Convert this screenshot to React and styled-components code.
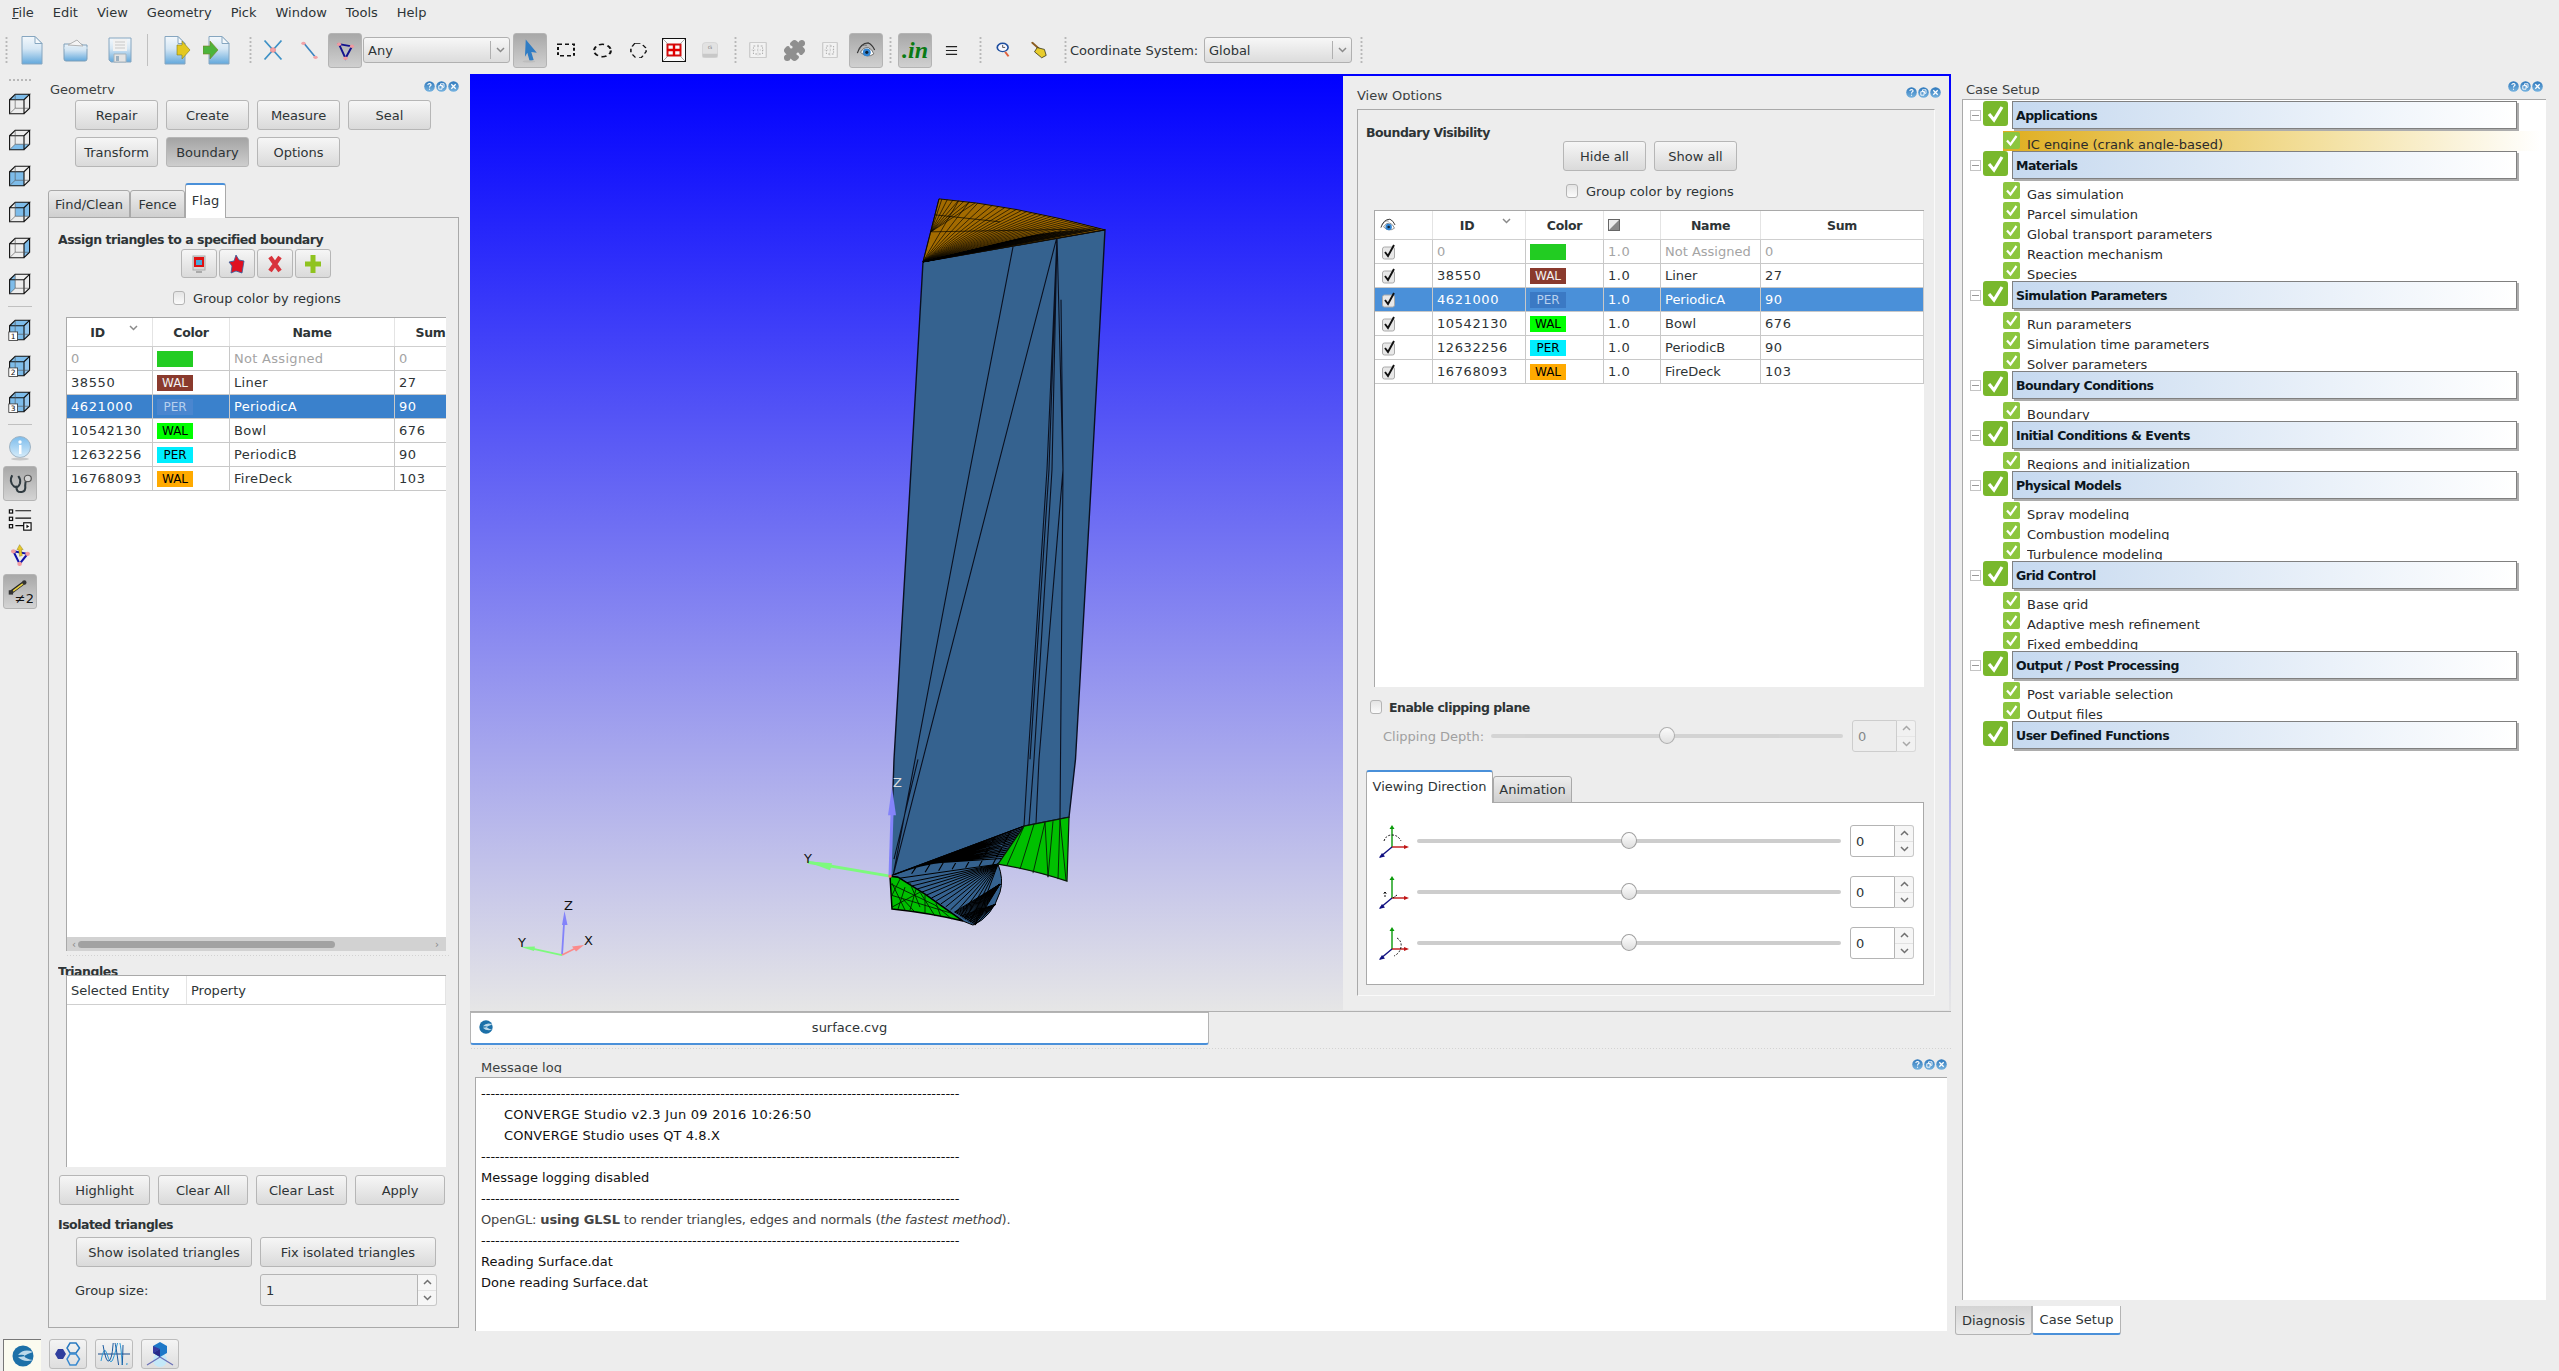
import React from "react";
import styled, { createGlobalStyle, css } from "styled-components";
import { Puzzle } from "lucide-react";

const FONT = `"DejaVu Sans", "Liberation Sans", sans-serif`;
const TXT = "#2e3436";
const EDGE = "#a9a9a9";
const boldText = css`font-weight: bold; font-size: 12.5px; letter-spacing: -0.5px;`;

const Global = createGlobalStyle`
  html, body { margin: 0; padding: 0; background: #ededed; overflow: hidden; }
  body { font-family: ${FONT}; font-size: 13px; color: ${TXT}; }
  * { box-sizing: border-box; }
`;

const Defs = styled.svg`width: 0; height: 0; position: absolute;`;
const Window = styled.div`width: 2559px; height: 1371px; display: flex; flex-direction: column; background: #ededed; overflow: hidden;`;
const MenuBar = styled.div`height: 26px; display: flex; align-items: center; gap: 19px; padding-left: 12px; flex: none;`;
const MenuItem = styled.span`font-size: 13px; line-height: 26px; &::first-letter { text-decoration: ${p => (p.$u ? "underline" : "none")}; }`;
const ToolBar = styled.div`height: 48px; display: flex; align-items: center; flex: none; padding-left: 3px; padding-top: 0;`;
const ToolButton = styled.div`
  flex: none; display: flex; align-items: center; justify-content: center; height: 35px; border-radius: 3px;
  width: ${p => p.$w || 34}px; margin: 0 ${p => (p.$w ? 0 : 1)}px;
  ${p => p.$on && css`background: linear-gradient(#a8a8a8, #d0d0d0); border: 1px solid #b4b4b4;`}
`;
const Grip = styled.div`
  flex: none; width: 3px; height: 28px; margin: 0 ${p => p.$r ?? 2}px 0 ${p => p.$l ?? 2}px;
  background: radial-gradient(circle, #b8b8b8 1px, transparent 1.2px) 0 0 / 3px 4px;
`;
const ToolSep = styled.div`flex: none; width: 1px; height: 32px; background: #c0c0c0; margin: 0 5px;`;
const Combo = styled.div`
  flex: none; height: 26px; width: ${p => p.$w}px; margin-left: ${p => p.$ml ?? 0}px; margin-right: ${p => p.$mr ?? 0}px;
  display: flex; align-items: center; justify-content: space-between; padding-left: 4px; font-size: 13px;
  border: 1px solid #b0b0b0; border-radius: 3px; background: linear-gradient(#f7f7f7, #dcdcdc);
`;
const ComboArrow = styled.span`
  width: 19px; height: 18px; border-left: 1px solid #b0b0b0; display: flex; align-items: center; justify-content: center;
`;
const ToolLabel = styled.span`flex: none; width: 128px; font-size: 13px; white-space: nowrap;`;

const Main = styled.div`height: 1263px; display: flex; flex: none;`;
const Rail = styled.div`width: 40px; flex: none; display: flex; flex-direction: column; align-items: center; padding-top: 4px;`;
const RailGrip = styled.div`
  width: 24px; height: 4px; margin-bottom: 4px; flex: none;
  background: radial-gradient(circle, #b8b8b8 1px, transparent 1.2px) 0 0 / 4px 4px;
`;
const RailButton = styled.div`
  width: 34px; height: 35px; margin-bottom: 1px; flex: none; display: flex; align-items: center; justify-content: center; border-radius: 3px;
  ${p => p.$on && css`background: linear-gradient(#a8a8a8, #d4d4d4); border: 1px solid #b4b4b4;`}
`;
const RailSep = styled.div`width: 24px; height: 1px; background: #c0c0c0; margin: 4px 0 5px; flex: none;`;

const LeftDock = styled.div`width: 430px; flex: none; padding: 6px 11px 0 8px; display: flex; flex-direction: column;`;
const DockTitle = styled.div`
  height: ${p => p.$h || 14}px; flex: none; overflow: hidden; display: flex; justify-content: space-between; align-items: flex-start;
  font-size: 13px; line-height: 20px; padding-left: ${p => p.$pl ?? 2}px; padding-right: ${p => p.$pr ?? 0}px; color: #3b3f41;
`;
const DockIcons = styled.span`display: flex; gap: 1px; padding-top: 1px;`;
const ButtonGrid = styled.div`
  display: grid; grid-template-columns: repeat(4, 83px); grid-auto-rows: 30px; column-gap: 8px; row-gap: 7px; margin: 6px 0 0 27px;
`;
const Btn = styled.div`
  height: 30px; display: flex; align-items: center; justify-content: center; font-size: 13px; white-space: nowrap;
  width: ${p => (p.$w ? `${p.$w}px` : "auto")}; flex: none; border-radius: 3px; border: 1px solid #b6b6b6; color: ${TXT};
  background: ${p => (p.$on ? "linear-gradient(#a4a4a4, #cecece)" : "linear-gradient(#f6f6f6, #dadada)")};
`;
const TabRow = styled.div`display: flex; align-items: flex-end; flex: none; margin: ${p => p.$mt}px 0 -1px ${p => p.$ml ?? 0}px; position: relative; z-index: 1;`;
const Tab = styled.div`
  width: ${p => p.$w}px; height: ${p => (p.$on ? p.$ha ?? 35 : p.$hi ?? 28)}px; display: flex; align-items: center; justify-content: center;
  font-size: 13px; border: 1px solid ${EDGE}; border-radius: 3px 3px 0 0;
  ${p => (p.$on
    ? css`background: #fff; border-top: 2px solid #4a90d9; border-bottom: none; padding-bottom: 2px;`
    : css`background: linear-gradient(#ededed, #cfcfcf);`)}
`;
const Frame = styled.div`
  flex: none; height: 1111px; display: flex; flex-direction: column; border: 1px solid ${EDGE}; background: #ededed;
`;
const BoldLine = styled.div`
  ${boldText}
  height: ${p => p.$h || 16}px; line-height: 16px; flex: none; overflow: hidden;
  margin: ${p => p.$mt}px 0 0 ${p => p.$ml}px; white-space: nowrap;
`;
const BoldInline = styled.span`${boldText}`;
const IconRow = styled.div`display: flex; gap: 2px; margin: 1px 0 0 132px; flex: none;`;
const IconBtn = styled.div`
  width: 36px; height: 29px; display: flex; align-items: center; justify-content: center; border-radius: 3px; border: 1px solid #b6b6b6;
  background: linear-gradient(#f6f6f6, #dadada);
`;
const CheckRow = styled.div`
  display: flex; align-items: center; gap: ${p => p.$gap ?? 8}px; height: 16px; flex: none; margin: ${p => p.$mt}px 0 0 ${p => p.$ml}px; font-size: 13px; white-space: nowrap;
`;
const Box = styled.span`
  flex: none; width: 12px; height: 14px; border: 1px solid #b4b4b4; border-radius: 3px; background: linear-gradient(#e4e4e4, #fbfbfb);
`;
const TableWrap = styled.div`
  flex: none; width: ${p => p.$w}px; height: ${p => p.$h}px; margin: ${p => p.$mt}px 0 0 ${p => p.$ml}px; background: #fff; overflow: hidden;
  border-top: 1px solid ${EDGE}; border-left: 1px solid ${EDGE}; display: flex; flex-direction: column;
`;
const HeadRow = styled.div`
  display: grid; grid-template-columns: ${p => p.$cols}; height: 29px; flex: none; border-bottom: 1px solid #cfcfcf; width: max-content; min-width: 100%;
`;
const HeadCell = styled.div`
  display: flex; align-items: center; justify-content: ${p => p.$left ? "flex-start" : "center"};
  ${p => (p.$light ? css`font-size: 13px;` : css`font-size: 12.5px; font-weight: bold; letter-spacing: -0.3px;`)}
  border-right: 1px solid #e4e4e4; padding: 0 ${p => p.$pr ?? 0}px 0 ${p => (p.$left ? 4 : 0)}px; position: relative; white-space: nowrap;
`;
const SortMark = styled.span`position: absolute; right: 14px; top: 7px; display: flex;`;
const BodyRow = styled.div`
  display: grid; grid-template-columns: ${p => p.$cols}; height: 24px; flex: none; border-bottom: 1px solid #c8c8c8; width: max-content; min-width: 100%;
  ${p => p.$sel && css`background: ${p.$sel}; color: #fff;`}
  ${p => p.$dim && css`color: #a4a4a4;`}
`;
const Cell = styled.div`
  display: flex; align-items: center; padding-left: 4px; font-size: 13px; letter-spacing: ${p => p.$ls ?? 0}px; border-right: 1px solid #c8c8c8; white-space: nowrap; overflow: hidden;
  justify-content: ${p => (p.$c ? "center" : "flex-start")};
`;
const Swatch = styled.span`
  width: 36px; height: 16px; display: flex; align-items: center; justify-content: center; font-size: 12px; background: ${p => p.$bg}; color: ${p => p.$fg};
`;
const VisBox = styled.svg`display: block; margin-left: 2px;`;
const TableFill = styled.div`flex: 1;`;
const HScroll = styled.div`height: 14px; flex: none; background: #d2d2d2; display: flex; align-items: center; justify-content: space-between; padding: 0 7px 0 5px; font-size: 10px; color: #888;`;
const HThumb = styled.span`width: 257px; height: 7px; border-radius: 4px; background: #a2a2a2; margin-right: 98px;`;
const Dots = styled.div`
  flex: none; height: ${p => p.$h || 4}px; margin: ${p => p.$mt}px ${p => p.$mr ?? 0}px 0 ${p => p.$ml ?? 0}px;
  background: radial-gradient(circle, #d2d2d2 .8px, transparent 1px) 0 0 / 3px 3px;
`;
const BtnRow = styled.div`display: flex; gap: ${p => p.$gap ?? 8}px; flex: none; margin: ${p => p.$mt}px 0 0 ${p => p.$ml}px;`;
const SpinRow = styled.div`display: flex; align-items: center; flex: none; margin: ${p => p.$mt}px 0 0 ${p => p.$ml}px; height: 32px;`;
const SpinLabel = styled.span`font-size: 13px; width: ${p => p.$w}px; flex: none; color: ${p => p.$c || TXT};`;
const SpinBox = styled.div`
  flex: none; display: flex; height: 32px; width: ${p => p.$w + 19}px; margin-left: ${p => p.$ml ?? 0}px; opacity: ${p => (p.$off ? 0.55 : 1)};
`;
const SpinInput = styled.div`
  flex: 1; border: 1px solid #b4b4b4; border-radius: 3px 0 0 3px; background: ${p => p.$bg || "#fff"}; display: flex; align-items: center; padding-left: 5px; font-size: 13px;
`;
const SpinBtns = styled.div`
  width: 19px; flex: none; border: 1px solid #c8c8c8; border-left: none; border-radius: 0 3px 3px 0; background: #f6f6f6; display: flex; flex-direction: column;
`;
const SpinHalf = styled.span`flex: 1; display: flex; align-items: center; justify-content: center; & + & { border-top: 1px solid #e2e2e2; }`;

const Center = styled.div`width: 1487px; flex: none; display: flex; flex-direction: column;`;
const Viewport = styled.div`
  width: 1481px; height: 938px; flex: none; display: flex; padding: 2px 2px 0 0;
  background: linear-gradient(#0000ff, #e6e6e6); border-bottom: 1px solid #b0b0b0;
`;
const Canvas = styled.div`flex: 1; margin-top: -2px; min-width: 0;`;
const CanvasSvg = styled.svg`display: block; width: 100%; height: 100%;`;
const ViewPanel = styled.div`width: 606px; flex: none; background: #ededed; padding-top: 10px; display: flex; flex-direction: column; margin-bottom: 1px;`;
const ViewFrame = styled.div`
  flex: none; width: 578px; height: 887px; margin: 9px 0 0 14px; display: flex; flex-direction: column;
  border-top: 1px solid ${EDGE}; border-left: 1px solid ${EDGE}; border-right: 1px solid #fafafa; border-bottom: 1px solid #fafafa;
`;
const SliderTrack = styled.div`
  flex: none; position: relative; height: 4px; width: ${p => p.$w}px; border-radius: 2px; margin-left: ${p => p.$ml ?? 0}px; background: #cdcdcd; opacity: ${p => (p.$off ? 0.8 : 1)};
`;
const SliderKnob = styled.span`
  position: absolute; top: -7px; left: ${p => p.$x}px; width: 16px; height: 17px; border-radius: 50%; border: 1px solid #a0a0a0; background: linear-gradient(#fff, #dedede);
`;
const TabBody = styled.div`
  flex: none; width: 558px; height: 183px; margin-left: 8px; background: #fff; border: 1px solid ${EDGE}; padding-top: 22px; display: flex; flex-direction: column; gap: 19px;
`;
const AxisRow = styled.div`display: flex; align-items: center; height: 32px; padding-left: 11px; flex: none;`;

const DocRow = styled.div`height: 33px; flex: none; display: flex;`;
const DocTab = styled.div`
  width: 739px; height: 33px; display: grid; grid-template-columns: 30px 1fr 10px; align-items: center; justify-items: center; background: #fff; font-size: 13px;
  border: 1px solid #b4b4b4; border-bottom: 2px solid #4a90d9; border-radius: 0 0 3px 3px; padding-bottom: 2px;
`;
const LogBox = styled.div`
  flex: none; width: 1472px; height: 254px; margin: 4px 0 0 5px; background: #fff; color: #111; padding: 5px 0 0 5px;
  border-top: 1px solid ${EDGE}; border-left: 1px solid ${EDGE};
`;
const LogLine = styled.div`
  height: 21px; line-height: 21px; font-size: 13px; white-space: nowrap; padding-left: ${p => p.$in ? 23 : 0}px; color: ${p => p.$c || "#111"};
  letter-spacing: ${p => p.$ls ?? 0}px;
`;
const CenterGap = styled.div`height: 7px; flex: none;`;

const RightDock = styled.div`flex: 1; padding-top: 6px; display: flex; flex-direction: column;`;
const Tree = styled.div`
  flex: none; width: 584px; height: 1201px; margin: 4px 0 0 5px; background: #fff; padding-top: 1px; border-top: 1px solid ${EDGE}; border-left: 1px solid ${EDGE}; overflow: hidden;
`;
const GroupHead = styled.div`height: 30px; display: flex; align-items: flex-start;`;
const Minus = styled.span`
  flex: none; width: 11px; height: 11px; margin: 9px 2px 0 7px; border: 1px solid #c4c4c4; display: flex; align-items: center; justify-content: center; ${p => p.$hide && "visibility: hidden;"}
`;
const MinusBar = styled.span`width: 7px; height: 1px; background: #999;`;
const HeadBox = styled.div`
  ${boldText}
  flex: none; width: 505px; height: 28px; margin-left: 4px; border: 1px solid #808080; box-shadow: 2px 2px 0 #adadad; color: #0b1620;
  background: linear-gradient(90deg, #c6d9ef, #ffffff); display: flex; align-items: center; padding-left: 3px;
`;
const Child = styled.div`
  height: 20px; width: 538px; margin-left: 40px; display: flex; align-items: flex-start; overflow: hidden; padding-top: 1px; font-size: 13px; color: #2a2a2a;
  ${p => p.$hi && css`background: linear-gradient(90deg, #dfae20, #f2dd96 55%, #ffffff);`}
`;
const ChildText = styled.span`height: 18px; overflow: hidden; line-height: 25px; margin-left: 7px; white-space: nowrap;`;
const DockTabs = styled.div`display: flex; margin: 6px 0 0 -2px; flex: none;`;
const DockTab = styled.div`
  height: 29px; width: ${p => p.$w}px; display: flex; align-items: center; justify-content: center; font-size: 13px; border: 1px solid #b4b4b4; border-top: none; border-radius: 0 0 3px 3px;
  ${p => (p.$on ? css`background: #fff; border-bottom: 2px solid #4a90d9;` : css`background: linear-gradient(#d4d4d4, #ececec);`)}
`;

const BottomBar = styled.div`height: 34px; flex: none; display: flex; gap: 8px; padding: 2px 0 0 3px;`;
const BarBtn = styled.div`
  width: 38px; height: 30px; display: flex; align-items: center; justify-content: center; border-radius: 3px;
  ${p => (p.$on
    ? css`background: #fbfbef; border-top: 1px solid #777; border-left: 1px solid #777; border-radius: 0; height: 32px;`
    : css`border: 1px solid #bcbcbc; background: linear-gradient(#f4f4f4, #dedede);`)}
`;
const InLogo = styled.span`font-family: "Liberation Serif", serif; font-size: 24px; font-weight: bold; font-style: italic; color: #0a7a14; line-height: 1;`;

/* ---------- icons ---------- */
const S = ({ w = 24, h = 24, vb, children }) => <svg width={w} height={h} viewBox={vb || `0 0 ${w} ${h}`} preserveAspectRatio="none">{children}</svg>;
const DocShape = () => (<>
  <path d="M2 1.5h13l7 7v20.5H2z" fill="url(#docB)" stroke="#86a6c0" />
  <path d="M15 1.5v7h7z" fill="#f4f8fb" stroke="#86a6c0" />
</>);
const INew = () => <S w={24} h={30}><DocShape /></S>;
const IOpen = () => <S w={28} h={24}><path d="M2 6h9l2-3 8 4h4v14q0 2-2 2H4q-2 0-2-2z" fill="url(#docB)" stroke="#7f9fb8" /><path d="M6 7l9-5 6 6z" fill="#f4f4f4" stroke="#b4b4b4" /><path d="M2 10h24" stroke="#d8e8f2" /></S>;
const ISave = () => <S w={26} h={28}><path d="M2 2h22v24H4l-2-2z" fill="url(#docB)" stroke="#86a6c0" /><path d="M6 3h14v12H6z" fill="#f2f2f2" /><path d="M8 6h10M8 9h10M8 12h10" stroke="#c8c8c8" /><path d="M7 18h12v8H7z" fill="#e4e4e4" stroke="#a8b4bc" /><path d="M9 20h3v5H9z" fill="#9cb0c0" /></S>;
const IXfer = ({ c, d }) => <S w={32} h={32}><g transform="translate(4 1)"><DocShape /></g><path d={d} fill={c} stroke="#7e7e22" strokeWidth=".6" /></S>;
const IX = () => <S w={22} h={22} vb="0 0 26 30"><path d="M3 2l20 26M23 2L3 28" stroke="#3f92c6" strokeWidth="2" /><circle cx="13" cy="15" r="3" fill="#f3a3a6" stroke="#e88" /></S>;
const IEdge = () => <S w={19} h={20} vb="0 0 22 30"><path d="M4 4l14 22" stroke="#3b84c0" strokeWidth="2" /><circle cx="4" cy="5" r="2.5" fill="#f3a3a6" /><circle cx="18" cy="26" r="2.5" fill="#f3a3a6" /></S>;
const ITri = () => <S w={21} h={21} vb="0 0 26 30"><path d="M5 6l16 3-8 17z" fill="none" stroke="#12128e" strokeWidth="2.5" /><circle cx="5" cy="6" r="2.6" fill="#f29aa0" /><circle cx="21" cy="9" r="2.6" fill="#f29aa0" /><circle cx="13" cy="26" r="2.6" fill="#f29aa0" /></S>;
const IArrow = () => <S w={19} h={25} vb="0 0 24 32"><path d="M6 2l14 17-7-1 3 10-5 2-3-11-3 5z" fill="#2f7cc4" /><ellipse cx="10" cy="30" rx="8" ry="1.5" fill="#bdbdbd" /></S>;
const IRect = () => <S w={20} h={16} vb="0 0 20 22"><rect x="2" y="3" width="16" height="16" fill="none" stroke="#111" strokeWidth="2" strokeDasharray="4 3" /></S>;
const ICirc = () => <S w={21} h={17} vb="0 0 20 22"><circle cx="10" cy="11" r="8" fill="none" stroke="#111" strokeWidth="2" strokeDasharray="5 3.5" /></S>;
const IPoly = () => <S w={19} h={19} vb="0 0 20 32"><path d="M6 4h7l5 8v6l-5 10H7L2 20v-8z" fill="none" stroke="#111" strokeWidth="1.6" strokeDasharray="6 4" /></S>;
const IRed = () => <S w={24} h={24}><rect x=".5" y=".5" width="23" height="23" fill="#fbfbfb" stroke="#111" /><rect x="5.500" y="6.500" width="13" height="11" fill="none" stroke="#d01010" strokeWidth="2" /><path d="M12 6v12M5 12h14" stroke="#e00000" strokeWidth="2.400" /><path d="M1 1l5 5M23 1l-5 5M1 23l5-5M23 23l-5-5" stroke="#888" strokeWidth=".7" /></S>;
const IKey = () => <S w={20} h={20} vb="0 0 24 32"><rect x="3" y="4" width="18" height="24" rx="4" fill="#e2e2e2" stroke="#d0d0d0" /><path d="M3 22h18v6H3z" fill="#c8c8c8" /><text x="12" y="14" fontSize="7" textAnchor="middle" fill="#888" fontFamily="DejaVu Sans">G</text></S>;
const IDash = ({ w = 22, dw, dh = 19 }) => <S w={dw} h={dh} vb={`0 0 ${w} 30`}><rect x="2" y="4" width={w - 4} height="22" fill="#f2f2f2" stroke="#bbb" /><rect x="6" y="9" width={w - 12} height="12" fill="none" stroke="#999" strokeDasharray="2 2" /><path d={`M${w / 2} 7v16M4 15h${w - 8}`} stroke="#aaa" strokeDasharray="1 2" /></S>;
const IEye = ({ s = 28 }) => <S w={s} h={s} vb="0 0 28 28"><path d="M3 18Q7 5 17 5q5 2 8 9" fill="none" stroke="#333" strokeWidth="1.5" /><path d="M5 14Q9 6 15 8" fill="none" stroke="#555" /><path d="M7 17q4-7 10-6 5 2 7 8-8 6-17-2z" fill="#fff" stroke="#555" /><circle cx="15" cy="17" r="5" fill="#3184d2" /><circle cx="15" cy="17" r="2" fill="#123" /></S>;
const ILines = () => <S w={13} h={11} vb="0 0 14 18"><path d="M1 2.5h12M1 9h12M1 15.500h12" stroke="#222" strokeWidth="2" /></S>;
const IClock = () => <S w={15} h={18} vb="0 0 18 28"><circle cx="8" cy="10" r="6.500" fill="#f8f8ff" stroke="#1f4f9f" strokeWidth="2" /><path d="M8 6v4h3" stroke="#222" fill="none" /><path d="M11 17l4 7" stroke="#e0603c" strokeWidth="2.5" /></S>;
const IBroom = () => <S w={18} h={18} vb="0 0 20 30"><path d="M2 2l8 11" stroke="#8a5c20" strokeWidth="2.5" /><path d="M8 11l8 3 2 10-5 4-8-10z" fill="#e8cc2c" stroke="#2a2a10" /></S>;

const ICube = ({ face, num }) => {
  const faces = {
    top: "M9 3h18L20 10H2z", bottom: "M9 21h18l-7 7H2z", front: "M2 10h18v18H2z", right: "M20 10l7-7v18l-7 7z",
    back: "M9 3h18v18H9z", left: "M2 10l7-7v18l-7 7z", all: "M9 3h18l-7 7v18H2V10z",
  };
  return (
    <S w={24} h={24} vb="0 0 30 31">
      {face === "all" && <path d="M20 10l7-7v18l-7 7z" fill="#93c6ee" />}
      {faces[face] && <path d={faces[face]} fill="#7dbcea" />}
      <g fill="none" stroke="#111" strokeWidth="1.400">
        <path d="M2 10h18v18H2zM2 10l7-7h18l-7 7M27 3v18l-7 7" />
        <path d="M9 3v18h18M9 21l-7 7" stroke="#555" strokeWidth=".8" />
      </g>
      {num && <><rect x="1" y="18" width="11" height="11" fill="#fff" stroke="#333" /><text x="6.500" y="27" fontSize="9.500" textAnchor="middle" fill="#111" fontFamily="DejaVu Sans">{num}</text></>}
    </S>
  );
};
const IInfo = () => <S w={24} h={26}><circle cx="12" cy="12" r="10.500" fill="url(#info)" stroke="#9fb4c4" /><path d="M11 10h2.500v9H11z" fill="#fff" /><circle cx="12" cy="7" r="1.700" fill="#fff" /><ellipse cx="12" cy="24" rx="9" ry="1.500" fill="#c8c8c8" /></S>;
const ISteth = () => <S w={26} h={24} vb="0 0 30 30"><path d="M6 4Q2 12 8 18q5 3 7-4 1-5-2-9M11 17q-1 9 6 8 5-1 4-8 0-4 1-6" fill="none" stroke="#2f3a40" strokeWidth="2.400" /><circle cx="24" cy="8" r="4" fill="#d4d4d4" stroke="#555" strokeWidth="1.400" /></S>;
const IList = () => <S w={24} h={24} vb="0 0 26 26"><g fill="none" stroke="#111" strokeWidth="1.300"><rect x="1.500" y="2" width="3.500" height="3.500" /><rect x="1.500" y="10" width="3.500" height="3.500" /><rect x="1.500" y="18" width="3.500" height="3.500" /><path d="M8 3h17M8 11h17M8 19h13" /><rect x="17" y="16" width="8" height="8" fill="#fff" /></g><path d="M20 18l3 2-3 2z" fill="#111" /></S>;
const ITriUp = () => <S w={23} h={25} vb="0 0 26 30"><path d="M5 10l16 3-9 12z" fill="none" stroke="#1212a8" strokeWidth="2.400" /><circle cx="5" cy="10" r="2.600" fill="#f29aa0" /><circle cx="21" cy="13" r="2.600" fill="#f29aa0" /><circle cx="12" cy="25" r="2.600" fill="#f29aa0" /><path d="M12 2l4 6h-2l1 7-3 1-1-8h-2z" fill="#e6c72a" stroke="#8a7a10" strokeWidth=".5" /></S>;
const INe2 = () => <S w={26} h={26} vb="0 0 30 30"><path d="M5 15L20 4" stroke="#222" strokeWidth="4" /><path d="M7 14L19 5" stroke="#e8d040" strokeWidth="2" /><circle cx="20" cy="4" r="2.500" fill="#333" /><rect x="2" y="13" width="5" height="5" fill="#333" /><text x="9" y="28" fontSize="15" fill="#111" fontFamily="DejaVu Sans">≠2</text></S>;
const ILogo = ({ s = 22 }) => <S w={s} h={s} vb="0 0 22 22"><circle cx="11" cy="11" r="10.500" fill="#1c70a8" /><path d="M21 7Q12 3 6 10q6-1 7 1-4 1-7 1 6 6 15 3-7-1-9-4 3-2 9-4z" fill="#bcd9ea" /></S>;
const IHex = () => <S w={30} h={26}><path d="M11 13l-3 5H3l-3-5 3-5h5z" transform="translate(2 0)" fill="#2f3e9e" /><path d="M23 2l3.500 5-3.500 5h-6l-3-5 3-5z" fill="none" stroke="#2a7ac0" strokeWidth="1.500" /><path d="M23 13l3.500 5-3.500 6h-6l-3-6 3-5z" fill="none" stroke="#3a8ad0" strokeWidth="1.500" /></S>;
const IWave = () => <S w={32} h={22}><path d="M0 11h32" stroke="#1a4c8c" strokeWidth="1" /><path d="M3 18Q6 1 9 11t5 7 5-16 5 16 5 2" fill="none" stroke="#2d98d4" strokeWidth="1" /><path d="M5 2q3 18 6 16t4-16 5 16 5-16" fill="none" stroke="#1a5aa0" strokeWidth="1" /></S>;
const IMol = () => <S w={32} h={28}><circle cx="16" cy="20" r="7" fill="#c4e8f8" /><path d="M16 17L3 25M16 17l13 8" stroke="#6a70b8" strokeWidth="1.300" /><path d="M16 2l7 4v7l-7 4-7-4V6z" fill="#1d78c8" /><path d="M16 9l-7 4 7 4z" fill="#2a2a88" /><path d="M9 6l7 3-7 4z" fill="#3a3aa0" /></S>;

const IWin = ({ k }) => (
  <S w={11} h={11}>
    <circle cx="5.500" cy="5.500" r="5.300" fill="url(#dock)" />
    {k === "?" && <path d="M3.800 4Q4 2.500 5.500 2.500 7.300 2.700 7 4.300q-1.500 1-1.500 2.200M5.500 7.800v1" stroke="#fff" strokeWidth="1.100" fill="none" />}
    {k === "r" && <path d="M4.500 2.800h3.500v3.500H6.500V4.500H4.500zM2.800 4.700h3.200v3.500H2.800z" fill="none" stroke="#fff" strokeWidth=".9" />}
    {k === "x" && <path d="M3.300 3.300l4.400 4.400M7.700 3.300L3.300 7.700" stroke="#fff" strokeWidth="1.300" />}
  </S>
);
const WinIcons = () => <DockIcons><IWin k="?" /><IWin k="r" /><IWin k="x" /></DockIcons>;
const Chev = ({ up, c = "#8a8a8a", w = 9 }) => <S w={w} h={6} vb="0 0 9 6"><path d={up ? "M1 5l3.500-3.500L8 5" : "M1 1l3.500 3.500L8 1"} fill="none" stroke={c} strokeWidth="1.500" /></S>;
const IVis = () => <VisBox width="18" height="18" viewBox="0 0 18 18"><rect x="1.500" y="4" width="12" height="12" rx="2" fill="#e8e8e8" stroke="#aaa" /><path d="M4 9l3 4 6-11" fill="none" stroke="#111" strokeWidth="1.900" /></VisBox>;
const IAlpha = () => <S w={12} h={12}><rect x=".5" y=".5" width="11" height="11" fill="#eee" stroke="#666" /><path d="M11 1L1 11h10z" fill="#8a8a8a" /></S>;
const IBig = () => <S w={25} h={25}><rect width="25" height="25" rx="3" fill="#79b82c" /><path d="M6 13l5 6 8-13" fill="none" stroke="#fff" strokeWidth="3.200" /></S>;
const ISmall = () => <S w={17} h={17}><rect width="17" height="17" rx="2" fill="#8cc63f" /><path d="M4 8.500l3.500 4 6-8.500" fill="none" stroke="#fff" strokeWidth="2.200" /></S>;
const IBox1 = () => <S w={18} h={22}><rect x="3" y="3" width="12" height="14" fill="#d8d8d8" stroke="#aaa" /><rect x="4" y="4" width="10" height="10" fill="#e01010" /><rect x="6" y="7" width="6" height="5" fill="#4aa8d8" /><path d="M6 19h6" stroke="#aaa" strokeWidth="2" /></S>;
const IStar = () => <S w={18} h={22}><path d="M8 2l3 5 5 1-1 6-1 6-6-2-5 2 1-7-3-4 5-1z" fill="#e01020" stroke="#3060a0" strokeWidth=".8" /></S>;
const IDel = () => <S w={18} h={22}><path d="M4 4l10 14M14 4L4 18" stroke="#d8343c" strokeWidth="4.200" /></S>;
const IPlus = () => <S w={18} h={22}><path d="M9 2v18M1 11h16" stroke="#8fc31f" strokeWidth="5" /></S>;
const IAxes = ({ mode }) => (
  <S w={31} h={34}>
    <path d="M14 23V3" stroke="#0a9a0a" strokeWidth="1.400" /><path d="M14 1l-2.500 4h5z" fill="#0a9a0a" />
    <path d="M14 23h14" stroke="#c01414" strokeWidth="1.400" /><path d="M31 23l-5-2v4z" fill="#c01414" />
    <path d="M14 23L2 33" stroke="#101080" strokeWidth="1.400" /><path d="M1 34l6-1.500-3-3.500z" fill="#101080" />
    {mode === 0 && <path d="M6 17q2-6 8-6t9 6" fill="none" stroke="#111" strokeDasharray="2 1.500" />}
    {mode === 1 && <path d="M7 22v-5M7 17l-2 2M7 17l2 2M15 23l4-3" fill="none" stroke="#111" strokeDasharray="2 1" />}
    {mode === 2 && <path d="M19 12q5 3 4 9t-7 9" fill="none" stroke="#111" strokeDasharray="2 1.500" />}
  </S>
);

/* ---------- viewport drawing ---------- */
const arc = t => { const a = 1 - t; return [a * a * 939 + 2 * a * t * 1012 + t * t * 1105, a * a * 199 + 2 * a * t * 205 + t * t * 230]; };
const lerp = (p, q, t) => [p[0] + (q[0] - p[0]) * t, p[1] + (q[1] - p[1]) * t];
const range = n => Array.from({ length: n }, (_, i) => i / (n - 1));
const L = ([a, b], [c, d]) => `M${a.toFixed(1)} ${b.toFixed(1)}L${c.toFixed(1)} ${d.toFixed(1)}`;
const V0 = [923, 262], V1 = [1105, 230], APEX = [890, 877], RIDGE = [1024, 827], NECK = [998, 865];
const orangeFan = range(30).map(t => L(V0, arc(Math.pow(t, 0.6)))).join("")
  + range(7).map(t => L([931, 232], arc(0.02 + t * 0.22))).join("")
  + "M931 232L1100 229M935 215L1000 222";
const orangeBand = range(20).map(t => {
  const q = 0.35 + t * 0.6;
  const [x, y] = lerp(V0, V1, q);
  return L(V0, [x, y - 2 - 5 * Math.sin(t * Math.PI)]);
}).join("");
const ridgeStreaks = range(16).map(t => L(lerp(APEX, RIDGE, 0.03 + t * 0.22), lerp(RIDGE, NECK, t * 0.85))).join("")
  + range(7).map(t => L(lerp(APEX, RIDGE, 0.2 + t * 0.7), lerp(APEX, NECK, 0.2 + t * 0.75))).join("");
const bowlEdge = t => { const a = 1 - t; return [a * a * 900 + 2 * a * t * 925 + t * t * 975, a * a * 879 + 2 * a * t * 895 + t * t * 926]; };
const bowlFan = range(16).map(t => L(NECK, bowlEdge(Math.pow(t, 0.75)))).join("")
  + range(22).map(t => L([1000, 885], bowlEdge(0.78 + t * 0.22))).join("")
  + range(10).map(t => L([996, 905], bowlEdge(0.85 + t * 0.15))).join("");
const greenLeftMesh = "M891 885L935 906M891 896L951 914M892 908L920 893M905 888L898 910M916 890L910 911M925 896L925 914M936 904L941 918M900 880L892 896M910 884L920 908M920 893L935 917M903 900L914 912M892 884L905 911M935 906L952 920";
const greenRightMesh = "M1034 825L1020 870M1045 823L1033 874M1053 822L1048 878M1060 820L1058 880M1060 820L1066 881M1024 827L1007 866M1045 823L1048 878";

const Scene = () => (
  <CanvasSvg viewBox="470 74 873 938" preserveAspectRatio="none">
    <path d="M923 262L1105 230L1092 470L1075.500 760L1069 818L1024 827L890 877L894 760L911 470z" fill="#35628f" stroke="#0a1020" strokeWidth="1.400" />
    <path d="M1013 247L970 470L893 877M1057 237L997 470L893 877M1057 237L1047 470L1028 760L1024 827M1057 237L1063 470L1039 760L1036 824M1057 237L1049 470L1030 760M1057 237L1052 470L1034 760L1029 826M1061 300L1063 470L1060 820M894 860L918 760" fill="none" stroke="#0a1020" strokeWidth="1.100" />
    <path d="M923 262L939 199Q1012 205 1105 230z" fill="#a36b00" stroke="#1a1000" strokeWidth="1" />
    <path d={orangeFan} fill="none" stroke="#0c0800" strokeWidth=".7" />
    <path d={orangeBand} fill="none" stroke="#000" strokeWidth=".8" />
    <path d="M890 877L1024 827L998 865Q1004 880 1000 893Q992 918 973 926L963 922Q925 895 898 878z" fill="#35628f" stroke="#000" strokeWidth="1" />
    <path d={ridgeStreaks} fill="none" stroke="#000" strokeWidth="1.100" />
    <path d={bowlFan} fill="none" stroke="#000" strokeWidth="1" />
    <path d="M1024 827L1069 818L1067 882Q1030 870 998 865z" fill="#00c000" stroke="#0a1a0a" strokeWidth="1.200" />
    <path d={greenRightMesh} fill="none" stroke="#062006" strokeWidth=".9" />
    <path d="M890 877L892 910Q930 914 963 922L925 895L898 878z" fill="#00c000" stroke="#000" strokeWidth="1.500" />
    <path d={greenLeftMesh} fill="none" stroke="#002000" strokeWidth=".9" />
    <path d="M890 877L808 863" stroke="#7dfa7d" strokeWidth="3" />
    <path d="M806 862L832 864L830 871z" fill="#7dfa7d" />
    <path d="M890 877L892 815" stroke="#8383fa" strokeWidth="3" />
    <path d="M892 788L888 816H896z" fill="#8383fa" />
    <circle cx="890" cy="877" r="1.500" fill="#ff6a6a" />
    <text x="804" y="864" fontSize="13" fill="#111" fontFamily="DejaVu Sans">Y</text>
    <text x="893" y="788" fontSize="13" fill="#ddd" fontFamily="DejaVu Sans">Z</text>
    <path d="M562 956L564 925" stroke="#8383fa" strokeWidth="1.800" />
    <path d="M564.500 912L562 926H567.500z" fill="#8383fa" />
    <path d="M562 956L530 949" stroke="#7dfa7d" strokeWidth="1.800" />
    <path d="M521 948L535 947.500L534 952z" fill="#7dfa7d" />
    <path d="M562 956L576 949" stroke="#fb8b8b" strokeWidth="1.800" />
    <path d="M584 946L572 947.500L576 952.500z" fill="#fb8b8b" />
    <text x="564" y="911" fontSize="13" fill="#111" fontFamily="DejaVu Sans">Z</text>
    <text x="518" y="948" fontSize="13" fill="#111" fontFamily="DejaVu Sans">Y</text>
    <text x="584" y="946" fontSize="13" fill="#111" fontFamily="DejaVu Sans">X</text>
  </CanvasSvg>
);

/* ---------- data ---------- */
const ROWS = [
  ["0", "", "#22cc22", "#000", "Not Assigned", "0", "dim"],
  ["38550", "WAL", "#8a3a2d", "#f2f2f2", "Liner", "27"],
  ["4621000", "PER", null, "#b8d0ee", "PeriodicA", "90", "sel"],
  ["10542130", "WAL", "#00ff00", "#000", "Bowl", "676"],
  ["12632256", "PER", "#00eeff", "#000", "PeriodicB", "90"],
  ["16768093", "WAL", "#ffaa00", "#000", "FireDeck", "103"],
];
const LEFT_COLS = "86px 77px 165px 72px";
const RIGHT_COLS = "58px 93px 78px 57px 100px 163px";

const LeftTable = () => (
  <TableWrap $w={380} $h={634} $mt={11} $ml={17}>
    <HeadRow $cols={LEFT_COLS}>
      <HeadCell $pr={24}>ID<SortMark><Chev /></SortMark></HeadCell>
      <HeadCell>Color</HeadCell><HeadCell>Name</HeadCell><HeadCell>Sum</HeadCell>
    </HeadRow>
    {ROWS.map(r => (
      <BodyRow key={r[0]} $cols={LEFT_COLS} $dim={r[6] === "dim"} $sel={r[6] === "sel" ? "#3a81cc" : null}>
        <Cell $ls={0.6}>{r[0]}</Cell>
        <Cell><Swatch $bg={r[2] || "#4a86cf"} $fg={r[3]}>{r[1]}</Swatch></Cell>
        <Cell $ls={0.3}>{r[4]}</Cell><Cell $ls={0.6}>{r[5]}</Cell>
      </BodyRow>
    ))}
    <TableFill />
    <HScroll><span>‹</span><HThumb /><span>›</span></HScroll>
  </TableWrap>
);
const RightTable = () => (
  <TableWrap $w={550} $h={477} $mt={11} $ml={16}>
    <HeadRow $cols={RIGHT_COLS}>
      <HeadCell $left><IEye s={18} /></HeadCell>
      <HeadCell $pr={24}>ID<SortMark><Chev /></SortMark></HeadCell>
      <HeadCell>Color</HeadCell><HeadCell $left><IAlpha /></HeadCell><HeadCell>Name</HeadCell><HeadCell>Sum</HeadCell>
    </HeadRow>
    {ROWS.map(r => (
      <BodyRow key={r[0]} $cols={RIGHT_COLS} $dim={r[6] === "dim"} $sel={r[6] === "sel" ? "#4a90d9" : null}>
        <Cell><IVis /></Cell>
        <Cell $ls={0.6}>{r[0]}</Cell>
        <Cell><Swatch $bg={r[2] || "#3b79c4"} $fg={r[3]}>{r[1]}</Swatch></Cell>
        <Cell $ls={0.5}>1.0</Cell>
        <Cell>{r[4]}</Cell><Cell $ls={0.6}>{r[5]}</Cell>
      </BodyRow>
    ))}
  </TableWrap>
);

const Spin = ({ w, value, off, ml, bg }) => (
  <SpinBox $w={w} $ml={ml} $off={off}>
    <SpinInput $bg={bg}>{value}</SpinInput>
    <SpinBtns><SpinHalf><Chev up c="#707070" /></SpinHalf><SpinHalf><Chev c="#707070" /></SpinHalf></SpinBtns>
  </SpinBox>
);

const TREE = [
  ["Applications", ["IC engine (crank angle-based)"]],
  ["Materials", ["Gas simulation", "Parcel simulation", "Global transport parameters", "Reaction mechanism", "Species"]],
  ["Simulation Parameters", ["Run parameters", "Simulation time parameters", "Solver parameters"]],
  ["Boundary Conditions", ["Boundary"]],
  ["Initial Conditions & Events", ["Regions and initialization"]],
  ["Physical Models", ["Spray modeling", "Combustion modeling", "Turbulence modeling"]],
  ["Grid Control", ["Base grid", "Adaptive mesh refinement", "Fixed embedding"]],
  ["Output / Post Processing", ["Post variable selection", "Output files"]],
  ["User Defined Functions", []],
];
const DASH = "-".repeat(102);
const MENUS = ["File", "Edit", "View", "Geometry", "Pick", "Window", "Tools", "Help"];

export default function App() {
  return (
    <Window>
      <Global />
      <Defs>
        <defs>
          <linearGradient id="docB" x1="0" y1="0" x2="0" y2="1"><stop offset="0" stopColor="#f4f8fc" /><stop offset=".45" stopColor="#d4e6f4" /><stop offset="1" stopColor="#62a8dc" /></linearGradient>
          <linearGradient id="info" x1="0" y1="0" x2="0" y2="1"><stop offset="0" stopColor="#7cbcec" /><stop offset="1" stopColor="#d6ecfa" /></linearGradient>
          <linearGradient id="dock" x1="0" y1="0" x2="0" y2="1"><stop offset="0" stopColor="#2e78bc" /><stop offset="1" stopColor="#78b4e0" /></linearGradient>
        </defs>
      </Defs>
      <MenuBar>{MENUS.map((m, i) => <MenuItem key={m} $u={i === 0}>{m}</MenuItem>)}</MenuBar>
      <ToolBar>
        <Grip />
        <ToolButton $w={44}><INew /></ToolButton>
        <ToolButton $w={44}><IOpen /></ToolButton>
        <ToolButton $w={44}><ISave /></ToolButton>
        <ToolSep />
        <ToolButton $w={44}><IXfer c="#e4c820" d="M18 11h5v-4l8 9-8 9v-4h-5z" /></ToolButton>
        <ToolButton $w={44}><IXfer c="#4cb43c" d="M0 12h7V7l8 9-8 9v-5H0z" /></ToolButton>
        <Grip $l={8} $r={3} />
        <ToolButton><IX /></ToolButton>
        <ToolButton><IEdge /></ToolButton>
        <ToolButton $on><ITri /></ToolButton>
        <Combo $w={147} $mr={2}>Any<ComboArrow><Chev /></ComboArrow></Combo>
        <ToolButton $on><IArrow /></ToolButton>
        <ToolButton><IRect /></ToolButton>
        <ToolButton><ICirc /></ToolButton>
        <ToolButton><IPoly /></ToolButton>
        <ToolButton><IRed /></ToolButton>
        <ToolButton><IKey /></ToolButton>
        <Grip $l={6} $r={3} />
        <ToolButton><IDash dw={20} dh={20} /></ToolButton>
        <ToolButton><Puzzle size={23} color="#8f8f8f" fill="#8f8f8f" /></ToolButton>
        <ToolButton><IDash w={20} dw={18} dh={20} /></ToolButton>
        <ToolButton $on><IEye s={22} /></ToolButton>
        <Grip $l={5} $r={5} />
        <ToolButton $on><InLogo>.in</InLogo></ToolButton>
        <ToolButton><ILines /></ToolButton>
        <Grip $l={10} $r={3} />
        <ToolButton><IClock /></ToolButton>
        <ToolButton><IBroom /></ToolButton>
        <Grip $l={7} $r={3} />
        <ToolLabel>Coordinate System:</ToolLabel>
        <Combo $w={148} $ml={6}>Global<ComboArrow><Chev /></ComboArrow></Combo>
        <Grip $l={8} />
      </ToolBar>
      <Main>
        <Rail>
          <RailGrip />
          {["top", "bottom", "front", "back", "right", "left"].map(f => <RailButton key={f}><ICube face={f} /></RailButton>)}
          <RailSep />
          {["1", "2", "3"].map(n => <RailButton key={n}><ICube face="all" num={n} /></RailButton>)}
          <RailSep />
          <RailButton><IInfo /></RailButton>
          <RailButton $on><ISteth /></RailButton>
          <RailButton><IList /></RailButton>
          <RailButton><ITriUp /></RailButton>
          <RailButton $on><INe2 /></RailButton>
        </Rail>
        <LeftDock>
          <DockTitle>Geometry<WinIcons /></DockTitle>
          <ButtonGrid>
            {["Repair", "Create", "Measure", "Seal", "Transform", "Boundary", "Options"].map(b => <Btn key={b} $on={b === "Boundary"}>{b}</Btn>)}
          </ButtonGrid>
          <TabRow $mt={16}>
            <Tab $w={82}>Find/Clean</Tab><Tab $w={55}>Fence</Tab><Tab $w={41} $on>Flag</Tab>
          </TabRow>
          <Frame>
            <BoldLine $mt={14} $ml={9}>Assign triangles to a specified boundary</BoldLine>
            <IconRow><IconBtn><IBox1 /></IconBtn><IconBtn><IStar /></IconBtn><IconBtn><IDel /></IconBtn><IconBtn><IPlus /></IconBtn></IconRow>
            <CheckRow $mt={12} $ml={124}><Box />Group color by regions</CheckRow>
            <LeftTable />
            <Dots $mt={3} $ml={17} $mr={9} />
            <BoldLine $mt={6} $ml={9} $h={11}>Triangles</BoldLine>
            <TableWrap $w={380} $h={192} $mt={0} $ml={17}>
              <HeadRow $cols="120px 1fr"><HeadCell $left $light>Selected Entity</HeadCell><HeadCell $left $light>Property</HeadCell></HeadRow>
            </TableWrap>
            <BtnRow $mt={8} $ml={10}>
              <Btn $w={91}>Highlight</Btn><Btn $w={90}>Clear All</Btn><Btn $w={91}>Clear Last</Btn><Btn $w={90}>Apply</Btn>
            </BtnRow>
            <BoldLine $mt={12} $ml={9}>Isolated triangles</BoldLine>
            <BtnRow $mt={4} $ml={27}><Btn $w={176}>Show isolated triangles</Btn><Btn $w={176}>Fix isolated triangles</Btn></BtnRow>
            <SpinRow $mt={7} $ml={26}>
              <SpinLabel $w={185}>Group size:</SpinLabel>
              <Spin w={158} value="1" bg="#ededed" />
            </SpinRow>
          </Frame>
        </LeftDock>
        <Center>
          <Viewport>
            <Canvas><Scene /></Canvas>
            <ViewPanel>
              <DockTitle $pl={14} $pr={8}>View Options<WinIcons /></DockTitle>
              <ViewFrame>
                <BoldLine $mt={15} $ml={8} $h={15}>Boundary Visibility</BoldLine>
                <BtnRow $mt={1} $ml={205}><Btn $w={83}>Hide all</Btn><Btn $w={83}>Show all</Btn></BtnRow>
                <CheckRow $mt={12} $ml={208}><Box />Group color by regions</CheckRow>
                <RightTable />
                <CheckRow $mt={12} $ml={12} $gap={7}><Box /><BoldInline>Enable clipping plane</BoldInline></CheckRow>
                <SpinRow $mt={5} $ml={25}>
                  <SpinLabel $w={108} $c="#a0a0a0">Clipping Depth:</SpinLabel>
                  <SliderTrack $w={352} $off><SliderKnob $x={168} /></SliderTrack>
                  <Spin w={45} value="0" off ml={9} bg="#ededed" />
                </SpinRow>
                <TabRow $mt={18} $ml={8}>
                  <Tab $w={127} $on $ha={33}>Viewing Direction</Tab><Tab $w={79} $hi={27}>Animation</Tab>
                </TabRow>
                <TabBody>
                  {[0, 1, 2].map(i => (
                    <AxisRow key={i}>
                      <IAxes mode={i} />
                      <SliderTrack $w={424} $ml={8}><SliderKnob $x={204} /></SliderTrack>
                      <Spin w={45} value="0" ml={9} />
                    </AxisRow>
                  ))}
                </TabBody>
              </ViewFrame>
            </ViewPanel>
          </Viewport>
          <DocRow><DocTab><ILogo s={14} /><span>surface.cvg</span></DocTab></DocRow>
          <Dots $mt={2} $mr={6} />
          <CenterGap />
          <DockTitle $h={15} $pl={11} $pr={10}>Message log<WinIcons /></DockTitle>
          <LogBox>
            <LogLine>{DASH}</LogLine>
            <LogLine $in $ls={0.27}>CONVERGE Studio v2.3 Jun 09 2016 10:26:50</LogLine>
            <LogLine $in $ls={0.1}>CONVERGE Studio uses QT 4.8.X</LogLine>
            <LogLine>{DASH}</LogLine>
            <LogLine>Message logging disabled</LogLine>
            <LogLine>{DASH}</LogLine>
            <LogLine $c="#444" $ls={-0.16}>OpenGL: <b>using GLSL</b> to render triangles, edges and normals (<i>the fastest method</i>).</LogLine>
            <LogLine>{DASH}</LogLine>
            <LogLine>Reading Surface.dat</LogLine>
            <LogLine>Done reading Surface.dat</LogLine>
          </LogBox>
        </Center>
        <RightDock>
          <DockTitle $h={15} $pl={9} $pr={16}>Case Setup<WinIcons /></DockTitle>
          <Tree>
            {TREE.map(([head, kids], gi) => (
              <div key={head}>
                <GroupHead>
                  <Minus $hide={kids.length === 0}><MinusBar /></Minus>
                  <IBig />
                  <HeadBox>{head}</HeadBox>
                </GroupHead>
                {kids.map((k, i) => (
                  <Child key={k} $hi={gi === 0 && i === 0}><ISmall /><ChildText>{k}</ChildText></Child>
                ))}
              </div>
            ))}
          </Tree>
          <DockTabs><DockTab $w={77}>Diagnosis</DockTab><DockTab $w={89} $on>Case Setup</DockTab></DockTabs>
        </RightDock>
      </Main>
      <BottomBar>
        <BarBtn $on><ILogo s={22} /></BarBtn>
        <BarBtn><IHex /></BarBtn>
        <BarBtn><IWave /></BarBtn>
        <BarBtn><IMol /></BarBtn>
      </BottomBar>
    </Window>
  );
}
